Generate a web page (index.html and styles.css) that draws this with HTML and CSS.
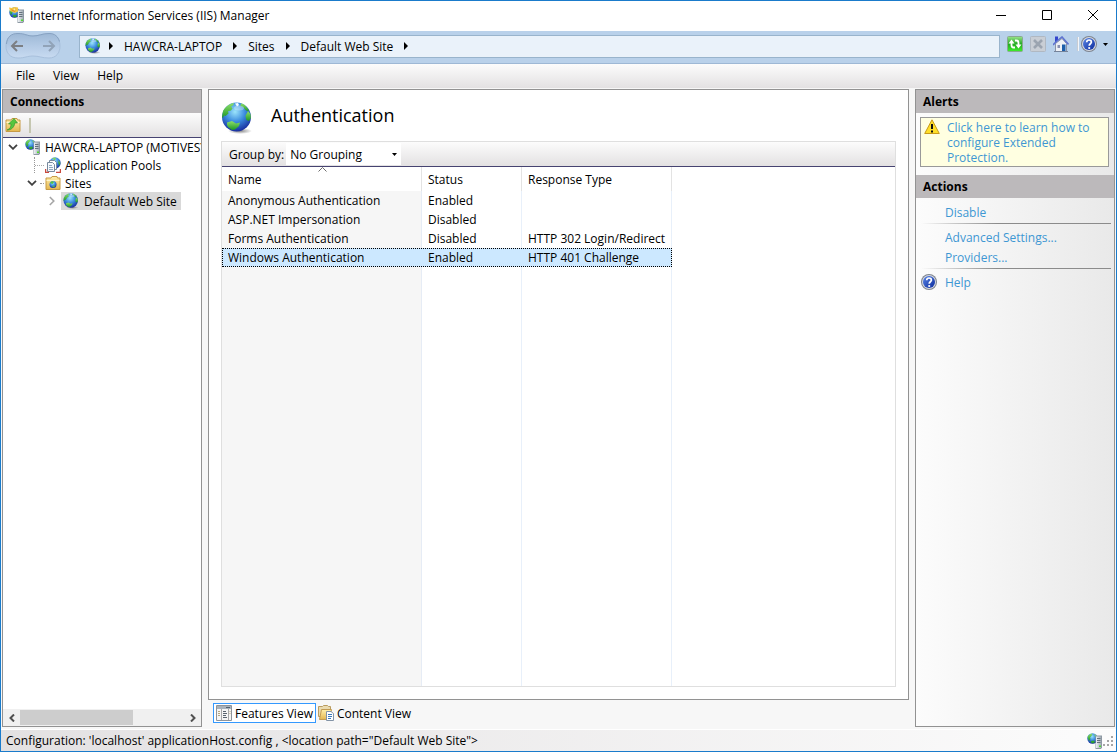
FILE: index.html
```html
<!DOCTYPE html>
<html lang="en">
<head>
<meta charset="utf-8">
<title>Internet Information Services (IIS) Manager</title>
<link rel="stylesheet" href="styles.css">
</head>
<body>
<svg class="defs" aria-hidden="true">
  <defs>
    <radialGradient id="sea" cx="45%" cy="32%" r="70%"><stop offset="0" stop-color="#9be4fb"/><stop offset=".5" stop-color="#3a8ade"/><stop offset="1" stop-color="#17289a"/></radialGradient>
    <linearGradient id="land" x2="0" y2="1"><stop offset="0" stop-color="#8fe06a"/><stop offset="1" stop-color="#1c9626"/></linearGradient>
    <linearGradient id="metal"><stop offset="0" stop-color="#eef2f5"/><stop offset="1" stop-color="#a3aeb7"/></linearGradient>
    <linearGradient id="manila" x2="0" y2="1"><stop offset="0" stop-color="#fff0ad"/><stop offset="1" stop-color="#e5b74f"/></linearGradient>
    <linearGradient id="green" x2="0" y2="1"><stop offset="0" stop-color="#9be58c"/><stop offset=".5" stop-color="#22a822"/><stop offset="1" stop-color="#3ff02c"/></linearGradient>
    <linearGradient id="blue" x2="1" y2="1"><stop offset="0" stop-color="#5a86e6"/><stop offset="1" stop-color="#0b2a9c"/></linearGradient>
    <linearGradient id="pill" x2="0" y2="1"><stop offset="0" stop-color="#9db8d6"/><stop offset=".5" stop-color="#b3cae5"/><stop offset="1" stop-color="#c8dbf1"/></linearGradient>
    <radialGradient id="shade"><stop offset="0" stop-color="#555" stop-opacity=".7"/><stop offset="1" stop-color="#555" stop-opacity="0"/></radialGradient>
  </defs>
  <symbol id="globe" viewBox="0 0 32 32">
    <ellipse cx="19" cy="29" rx="12" ry="3" fill="url(#shade)"/>
    <circle cx="15.500" cy="15" r="14.500" fill="url(#sea)"/>
    <path d="M2 9C5 4 9 1.500 13 1l-1 2.500-2 1 1.500 2-1.500 2-3 .8.500 2.200-3 2.500-1.500-.5L2 16 1 15z" fill="url(#land)"/>
    <path d="M20 1.200l3.500 1.600 3.500 4 1 2.700-3-1-3-3.500-2.500-.8z" fill="url(#land)"/>
    <path d="M27 9l2.500 3 .4 4-2 3-2.500-1-1-4z" fill="url(#land)"/>
    <path d="M6 20.500l5-1.500 4 2.500 4-1-1 3.500-4 3.500-3 .5-4-3-1-2z" fill="url(#land)"/>
    <path d="M14 1.500l3-.5 1 2-2 1.500z" fill="#f4fbff"/>
    <ellipse cx="18" cy="6" rx="5" ry="2.500" fill="#fff" opacity=".3"/>
  </symbol>
  <symbol id="tower" viewBox="0 0 16 16">
    <path d="M8.500 2.500H15v12l-1 1.500H8.500z" fill="#8e99a3"/>
    <path d="M9 3.500h5v11.500H9z" fill="url(#metal)"/>
    <path d="M10 5.500h3.500M10 7.500h3.500M10 9.500h3.500" stroke="#65717c"/>
    <path d="M12 12.500h2v1.500h-2z" fill="#4ee02c"/>
  </symbol>
  <symbol id="server" viewBox="0 0 16 16">
    <circle cx="5.500" cy="5.500" r="5.200" fill="url(#sea)"/>
    <path d="M.5 4C1.500 2 3.500.5 5.500.5L4.500 3 3 4.500 3.500 6 2 8z" fill="url(#land)"/>
    <path d="M4 8l3-.5 1 1.500-2 1.500-2-1zM7 1l2.500 1.500L8.500 4z" fill="url(#land)"/>
    <use href="#tower"/>
  </symbol>
  <symbol id="app" viewBox="0 0 16 16">
    <use href="#server"/>
    <path d="M0 .5L3 1l2-1 4 .5v4L6 6 1 4z" fill="#f4c542"/>
    <path d="M2 2l2 1 3-1.500L6 5 3 4z" fill="#e0902a"/>
    <circle cx="5.500" cy="2.500" r="1" fill="#fff3a5"/>
  </symbol>
  <symbol id="help" viewBox="0 0 16 16">
    <circle cx="8" cy="8" r="8" fill="#7d838e"/>
    <circle cx="8" cy="8" r="7" fill="#d6dae2"/>
    <circle cx="8" cy="8" r="6" fill="url(#blue)"/>
    <path d="M5.700 6.200C5.800 3.200 10.500 3.300 10.400 6.100 10.300 7.700 8.200 7.900 8.200 9.800" fill="none" stroke="#fff" stroke-width="1.700"/>
    <circle cx="8.200" cy="12" r="1.100" fill="#fff"/>
  </symbol>
  <symbol id="folder" viewBox="0 0 16 16">
    <path d="M1 3h5l1-1.500h5l.5 1.500H15v11.500H1z" fill="url(#manila)" stroke="#c79a45"/>
    <path d="M1.500 5.500h13" stroke="#fff5c9"/>
  </symbol>
  <symbol id="tri" viewBox="0 0 4 8"><path d="M0 0l4 4-4 4z"/></symbol>
  <symbol id="down" viewBox="0 0 10 6"><path d="M1 .8l4 4 4-4" fill="none" stroke="#404040" stroke-width="1.800"/></symbol>
</svg>

<div class="window">
  <header class="titlebar">
    <svg class="i16" aria-hidden="true"><use href="#app"/></svg>
    <h1 class="title">Internet Information Services (IIS) Manager</h1>
    <div class="caption">
      <button type="button" aria-label="Minimize"><svg viewBox="0 0 12 12"><path d="M1 6.500h10"/></svg></button>
      <button type="button" aria-label="Maximize"><svg viewBox="0 0 12 12"><path d="M1.500 1.500h9v9h-9z"/></svg></button>
      <button type="button" aria-label="Close"><svg viewBox="0 0 12 12"><path d="M1 1l10 10M11 1L1 11"/></svg></button>
    </div>
  </header>

  <nav class="addressbar" aria-label="Location">
    <div class="travel">
      <svg class="pill" viewBox="0 0 56 28" aria-hidden="true"><path d="M13 1.500C20 1.500 22 4 28 4S37 1.500 44 1.500C51 1.500 55 7 55 14s-4 12-11 12c-7 0-10-2-16-2s-8 2-15 2C5 26 1 21 1 14S5 1.500 13 1.500z" fill="url(#pill)" stroke="#a8c0dc"/><path d="M1.500 12C2 5 6 1.500 13 1.500 20 1.500 22 4 28 4S37 1.500 44 1.500c6 0 9 3 10.500 8" fill="none" stroke="#86a2c2"/></svg>
      <button type="button" aria-label="Back"><svg viewBox="0 0 14 12"><path d="M13 6H2M7 1L2 6l5 5" stroke="#7c7f84"/></svg></button>
      <button type="button" aria-label="Forward"><svg viewBox="0 0 14 12"><path d="M1 6h11M7 1l5 5-5 5" stroke="#91a3b8"/></svg></button>
    </div>
    <div class="crumbs">
      <svg class="i16" aria-hidden="true"><use href="#globe"/></svg>
      <svg class="tri"><use href="#tri"/></svg>
      <button type="button">HAWCRA-LAPTOP</button>
      <svg class="tri"><use href="#tri"/></svg>
      <button type="button">Sites</button>
      <svg class="tri"><use href="#tri"/></svg>
      <button type="button">Default Web Site</button>
      <svg class="tri"><use href="#tri"/></svg>
    </div>
    <div class="tools">
      <button type="button" aria-label="Refresh"><svg class="i16" viewBox="0 0 16 16"><rect x=".5" y=".5" width="15" height="15" rx="1" fill="url(#green)" stroke="#8aa892"/><path d="M8 11.500H6.500Q4.500 11.500 4.500 9V6M8 4.500h1.500q2 0 2 2.500v3" fill="none" stroke="#fff" stroke-width="1.800"/><path d="M1.500 7.500l3-4 3 4zM8.500 8.500h6l-3 4z" fill="#fff"/></svg></button>
      <button type="button" aria-label="Stop"><svg class="i16" viewBox="0 0 16 16"><rect x=".5" y=".5" width="15" height="15" rx="1" fill="#c9ced5" stroke="#b0b8c2"/><path d="M4 4l8 8M12 4l-8 8" stroke="#9ba4b0" stroke-width="2.600"/></svg></button>
      <button type="button" aria-label="Home"><svg class="i16" viewBox="0 0 16 16"><path d="M2.500 7.500L9 2.500l4.500 5v8h-11z" fill="#edf0f5" stroke="#8a93a8"/><path d="M2 .5h3v4L2 7z" fill="#3446cc"/><path d="M0 9L4 5l5-4 6.500 7.500" fill="none" stroke="#5f73cf" stroke-width="1.600"/><path d="M9 8.500h3.500v7H9z" fill="#1d5eaa"/><path d="M4.500 9h2.500v3H4.500z" fill="#8790b0"/><path d="M1 15.500h14" stroke="#75839a"/></svg></button>
      <span class="sep"></span>
      <button type="button" class="helpmenu" aria-label="Help menu"><svg class="i16"><use href="#help"/></svg><svg class="caret" viewBox="0 0 5 3"><path d="M0 0h5L2.500 3z"/></svg></button>
    </div>
  </nav>

  <nav class="menubar" aria-label="Menu">
    <button type="button">File</button>
    <button type="button">View</button>
    <button type="button">Help</button>
  </nav>

  <div class="panes">
    <aside class="pane connections">
      <h2 class="panehead">Connections</h2>
      <div class="panetools">
        <button type="button" aria-label="Up"><svg class="i16" viewBox="0 0 16 16"><use href="#folder"/><path d="M2 13c3-1 4-3 4-6H3.500L9 1.500 12.500 6h-2.700C9.500 10 6 13.500 2 13z" fill="#57c63e" stroke="#2f8d2a" stroke-width=".6"/></svg></button>
        <span class="bar"></span>
      </div>
      <ul class="tree">
        <li class="level0"><svg class="down"><use href="#down"/></svg><span class="dots"></span><svg class="i16"><use href="#server"/></svg><span class="label">HAWCRA-LAPTOP (MOTIVESY</span></li>
        <li class="level1 leaf"><span class="dots"></span><svg class="i16" viewBox="0 0 16 16"><circle cx="10" cy="6" r="5.700" fill="url(#sea)"/><path d="M7 1l4-.5-1 3zM13 3l2.500 3-1.500 3z" fill="url(#land)"/><path d="M4.500 3.500h5l2 2v7h-7z" fill="#fff" stroke="#77899d"/><path d="M2.500 5.500h5l2 2v7h-7z" fill="#f6f9fc" stroke="#77899d"/><path d="M4 8.500h3M4 10.500h4M4 12.500h4" stroke="#8fa7c2"/><path d="M.5 12v3.500H4M15.500 12v3.500H11" fill="none" stroke="#c94a3f" stroke-width="1.500"/></svg><span class="label">Application Pools</span></li>
        <li class="level1"><svg class="down"><use href="#down"/></svg><span class="dots"></span><svg class="i16" viewBox="0 0 16 16"><use href="#folder"/><circle cx="8" cy="9.500" r="3.500" fill="url(#sea)"/><path d="M5 8l2-2 2 1-1.500 2zM7 11l3-.5-1 2z" fill="#55c343"/></svg><span class="label">Sites</span></li>
        <li class="level2"><svg class="right" viewBox="0 0 6 10"><path d="M.8 1l4 4-4 4" fill="none" stroke="#a6a6a6" stroke-width="1.600"/></svg><span class="node"><svg class="i16"><use href="#globe"/></svg>Default Web Site</span></li>
      </ul>
      <div class="hscroll">
        <button type="button" aria-label="Scroll left"><svg viewBox="0 0 6 8"><path d="M5 .5L1.500 4 5 7.500"/></svg></button>
        <div class="track"><div class="thumb"></div></div>
        <button type="button" aria-label="Scroll right"><svg viewBox="0 0 6 8"><path d="M1 .5L4.500 4 1 7.500"/></svg></button>
      </div>
    </aside>

    <main class="center">
      <section class="feature">
        <div class="featurehead">
          <svg class="i32" aria-hidden="true"><use href="#globe"/></svg>
          <h2>Authentication</h2>
        </div>
        <div class="list">
          <div class="groupbar">
            <label for="group">Group by:</label>
            <div class="combo">
              <select id="group"><option>No Grouping</option></select>
              <svg class="caret" viewBox="0 0 5 3" aria-hidden="true"><path d="M0 0h5L2.500 3z"/></svg>
            </div>
          </div>
          <div class="grid">
            <table>
              <thead>
                <tr><th class="name">Name<svg class="sort" viewBox="0 0 9 5"><path d="M.5 4.500l4-4 4 4" fill="none" stroke="#6d6d6d"/></svg></th><th class="status">Status</th><th class="response">Response Type</th></tr>
              </thead>
              <tbody>
                <tr><td>Anonymous Authentication</td><td>Enabled</td><td></td></tr>
                <tr><td>ASP.NET Impersonation</td><td>Disabled</td><td></td></tr>
                <tr><td>Forms Authentication</td><td>Disabled</td><td>HTTP 302 Login/Redirect</td></tr>
                <tr class="selected"><td>Windows Authentication</td><td>Enabled</td><td>HTTP 401 Challenge</td></tr>
              </tbody>
            </table>
          </div>
        </div>
      </section>
      <div class="views">
        <button type="button" class="view active"><svg class="i16" viewBox="0 0 16 16"><path d="M.5.500h15v15H.5z" fill="#f5f5f5" stroke="#8d949b"/><path d="M1 1h14v3H1z" fill="#a9b2bb"/><path d="M10 2.500h4" stroke="#53616e"/><path d="M5.500 4v11M12.500 4v11" stroke="#a8a8a8"/><path d="M2 6.500h2M2 8.500h2M2 10.500h2M13.500 6.500h1M13.500 8.500h1" stroke="#b9a77d"/><path d="M7 6.500h3M7 8.500h4M7 10.500h3M7 12.500h4" stroke="#59636e"/></svg>Features View</button>
        <button type="button" class="view"><svg class="i16" viewBox="0 0 16 16"><path d="M.5 1.500h4l1-1h4l1 1h2v10H.5z" fill="#eadbb0" stroke="#b99c60"/><path d="M3.500 4.500h10l-2 10H1.500z" fill="url(#manila)" stroke="#c39c53"/><path d="M8.500 6.500h4.500l2.500 2v7h-7z" fill="#fff" stroke="#8293a6"/><path d="M10 9.500h4M10 11.500h4M10 13.500h3" stroke="#3978bd"/></svg>Content View</button>
      </div>
    </main>

    <aside class="pane actions">
      <h2 class="panehead">Alerts</h2>
      <div class="alert">
        <svg class="i16" viewBox="0 0 16 16"><path d="M8 .8l7.300 13.700H.7z" fill="#ffdf29" stroke="#c89a1b" stroke-linejoin="round"/><path d="M8 5v5M8 11.500v2" stroke="#111" stroke-width="2"/></svg>
        <a href="#">Click here to learn how to configure Extended Protection.</a>
      </div>
      <h2 class="panehead">Actions</h2>
      <ul class="links">
        <li><a href="#">Disable</a></li>
        <li class="rule"><a href="#">Advanced Settings...</a></li>
        <li><a href="#">Providers...</a></li>
        <li class="rule"><svg class="i16"><use href="#help"/></svg><a href="#">Help</a></li>
      </ul>
    </aside>
  </div>

  <footer class="statusbar">
    <span>Configuration: 'localhost' applicationHost.config , &lt;location path="Default Web Site"&gt;</span>
    <svg class="i16"><use href="#server"/></svg>
    <svg class="grip" viewBox="0 0 10 10" aria-hidden="true"><path d="M8 0h2v2H8zM8 4h2v2H8zM4 4h2v2H4zM0 8h2v2H0zM4 8h2v2H4zM8 8h2v2H8z" fill="#a5a5a5"/></svg>
  </footer>
</div>
</body>
</html>
```
FILE: styles.css
```css
* { box-sizing: border-box; }

body {
  margin: 0;
  font: 12px/15px "Open Sans", "Noto Sans", sans-serif;
  color: #000;
}

button {
  margin: 0;
  padding: 0;
  border: 0;
  background: none;
  font: inherit;
  color: inherit;
}

h1, h2, ul { margin: 0; padding: 0; }
ul { list-style: none; }
a { color: #3e97d3; text-decoration: none; }
svg { display: block; flex: none; }

.defs { position: absolute; width: 0; height: 0; }
.i16 { width: 16px; height: 16px; }
.i32 { width: 32px; height: 32px; }
.caret { width: 5px; height: 3px; }

.window {
  display: flex;
  flex-direction: column;
  height: 100vh;
  border: 1px solid #1a7bcb;
  background: #f7f7f7;
  overflow: hidden;
}

/* Title bar */
.titlebar {
  display: flex;
  align-items: center;
  height: 30px;
  padding: 0 0 2px 8px;
  gap: 5px;
  background: #fff;
}
.title { flex: 1; font-size: 12px; font-weight: 400; }
.caption { display: flex; }
.caption button { display: grid; place-items: center; width: 46px; height: 28px; }
.caption svg { width: 12px; height: 12px; fill: none; stroke: #000; }

/* Address bar */
.addressbar {
  display: flex;
  align-items: center;
  height: 33px;
  padding: 0 8px 2px 4px;
  background: #b9d1ea;
  border-bottom: 1px solid #9eb8d5;
}
.travel {
  display: flex;
  align-items: center;
  position: relative;
  width: 56px;
  height: 28px;
  margin-right: 18px;
  padding: 0 5px;
  justify-content: space-between;
}
.pill { position: absolute; inset: 0; width: 56px; height: 28px; }
.travel button { position: relative; }
.travel button svg { width: 14px; height: 12px; fill: none; stroke-width: 2; }
.crumbs {
  display: flex;
  flex: 1;
  align-items: center;
  gap: 11px;
  height: 23px;
  padding-left: 5px;
  border: 1px solid #99b4cc;
  background: #eaf2fa;
}
.crumbs .i16 { margin-right: -3px; }
.tri { width: 4px; height: 8px; }
.tools { display: flex; align-items: center; gap: 7px; padding: 0 0 4px 7px; }
.sep { width: 2px; height: 14px; margin-left: 1px; background: #f3f6fa; border-left: 1px solid #c8ccd2; }
.helpmenu { display: flex; align-items: center; gap: 6px; margin-left: -5px; }

/* Menu bar */
.menubar {
  display: flex;
  gap: 18px;
  height: 24px;
  padding: 0 15px 1px;
  background: linear-gradient(#fcfcfc, #e3e1e2);
}

/* Panes */
.panes {
  display: grid;
  grid-template-columns: 200px 1fr 200px;
  gap: 6px;
  flex: 1;
  min-height: 0;
  padding: 1px 1px 2px;
}
.pane { display: flex; flex-direction: column; min-width: 0; border: 1px solid #929292; }
.panehead {
  height: 23px;
  padding: 0 7px;
  background: #bcb9bb;
  font-size: 12px;
  line-height: 23px;
  font-weight: 700;
}
.connections { background: #fff; }
.panetools {
  display: flex;
  align-items: center;
  gap: 8px;
  height: 25px;
  padding: 0 2px;
  border-bottom: 1px solid #464371;
  background: linear-gradient(#fcfcfc, #e3e1e2);
}
.bar { width: 2px; height: 15px; background: #c5c6b0; }

.tree { flex: 1; overflow: hidden; }
.tree li { display: flex; align-items: center; height: 18px; white-space: nowrap; }
.tree .level0 { padding-left: 5px; }
.tree .level1 { padding-left: 24px; }
.tree .level1.leaf { padding-left: 30px; }
.tree .level2 { padding-left: 46px; }
.tree .down { width: 10px; height: 6px; }
.tree .right { width: 6px; height: 10px; margin-right: 6px; }
.dots { width: 4px; margin: 0 1px 0 3px; border-top: 1px dotted #999; }
.level0 .dots { margin-right: 4px; }
.leaf .dots { width: 10px; height: 16px; margin: 0 1px; border-left: 1px dotted #999; border-top: 0; background: linear-gradient(90deg, #aaa 50%, transparent 50%) 0 8px / 2px 1px repeat-x; }
.label { margin-left: 4px; }
.node { display: flex; align-items: center; gap: 5px; height: 18px; padding: 0 4px 0 2px; background: #d9d9d9; }

.hscroll { display: flex; height: 17px; background: #f0f0f0; }
.hscroll button { display: grid; place-items: center; width: 17px; }
.hscroll svg { width: 6px; height: 8px; fill: none; stroke: #505050; stroke-width: 2; }
.track { flex: 1; padding: 1px 0; }
.thumb { width: 69%; height: 15px; background: #cdcdcd; }

/* Feature page */
.center { display: flex; flex-direction: column; min-width: 0; }
.feature {
  display: flex;
  flex: 1;
  flex-direction: column;
  padding: 12px;
  border: 1px solid #929292;
  background: #fff;
}
.featurehead { display: flex; gap: 18px; height: 39px; }
.featurehead h2 { font-size: 18px; line-height: 26px; font-weight: 400; }
.list { display: flex; flex: 1; flex-direction: column; border: 1px solid #dfdfdf; }
.groupbar {
  display: flex;
  align-items: center;
  gap: 2px;
  height: 25px;
  padding-left: 7px;
  border-bottom: 1px solid #464371;
  background: linear-gradient(#fcfcfc, #e3e1e2);
}
.combo { display: flex; align-items: center; width: 115px; height: 22px; padding-right: 4px; background: #fff; }
.combo select {
  flex: 1;
  padding: 0 4px;
  border: 0;
  background: none;
  appearance: none;
  font: inherit;
  color: inherit;
}
.grid {
  flex: 1;
  background:
    linear-gradient(#e6ecf5, #e6ecf5) 199px 0 / 1px 100% no-repeat,
    linear-gradient(#e8f0fa, #e8f0fa) 299px 0 / 1px 100% no-repeat,
    linear-gradient(#e8f0fa, #e8f0fa) 449px 0 / 1px 100% no-repeat,
    linear-gradient(#f6f6f6, #f6f6f6) 0 24px / 199px 100% no-repeat;
}
table { width: 450px; table-layout: fixed; border-collapse: separate; border-spacing: 0; text-align: left; }
th, td { padding: 0 6px; white-space: nowrap; }
th { position: relative; height: 24px; border-right: 1px solid #e3e3e3; font-weight: 400; }
td { height: 19px; }
.name { width: 200px; }
.status { width: 100px; }
.response { width: 150px; }
.sort { position: absolute; top: 0; left: 96px; width: 9px; height: 5px; }
.selected { background: #cce8ff; outline: 1px dotted #000; outline-offset: -1px; }

.views { display: flex; align-items: center; height: 27px; padding: 0 0 1px 5px; }
.view { display: flex; align-items: center; gap: 3px; height: 20px; padding: 0 1px; border: 1px solid transparent; }
.view.active { padding: 0 2px; border-color: #3399ff; background: #fff; }

/* Alerts and actions */
.actions { background: linear-gradient(90deg, #fcfcfc, #e9e9e9); }
.alert {
  display: flex;
  gap: 7px;
  margin: 4px 5px 8px 4px;
  padding: 1px 4px 0 3px;
  border: 1px solid #999;
  background: #ffffe1;
}
.alert a { padding: 1px 0; }
.links { padding: 4px 3px 0 5px; }
.links li { display: flex; align-items: center; gap: 8px; height: 20px; padding-left: 24px; }
.links li:has(svg) { padding-left: 0; }
.links .rule {
  height: 25px;
  padding-top: 5px;
  background: linear-gradient(90deg, transparent, #8b8b8b 40%) 0 1px / 100% 1px no-repeat;
}

/* Status bar */
.statusbar {
  display: flex;
  align-items: center;
  height: 22px;
  padding: 0 3px 0 5px;
  border-top: 1px solid #fff;
  background: linear-gradient(90deg, #e3e1e2, #fcfcfc);
}
.statusbar span { flex: 1; }
.grip { width: 10px; height: 10px; }
```
